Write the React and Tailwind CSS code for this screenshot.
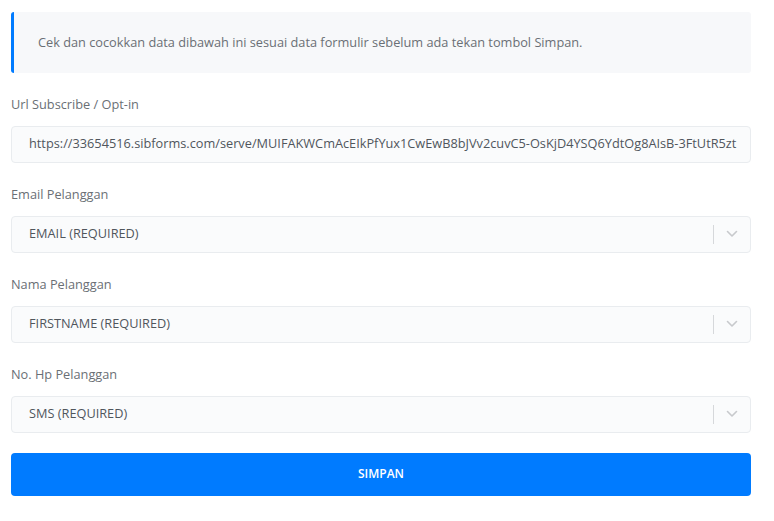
import React from 'react';

function Chevron() {
    return (
        <svg width="12" height="8" viewBox="0 0 12 8" fill="none">
            <path d="M1.5 1.5 L6 6 L10.5 1.5" stroke="#c7c9cc" strokeWidth="1.6" strokeLinecap="round" strokeLinejoin="round" />
        </svg>
    );
}

function SelectBox({ value }) {
    return (
        <div className="h-[37px] flex items-center bg-[#fafbfc] border border-[#e9ecef] rounded-[4px] text-[#50565c]">
            <div className="flex-1 pl-[17px] text-[12.75px]">{value}</div>
            <div className="w-px h-[19px] bg-[#d6d8db]"></div>
            <div className="w-[36px] flex items-center justify-center">
                <Chevron />
            </div>
        </div>
    );
}

export default function App() {
    const fields = [
        { label: 'Email Pelanggan', value: 'EMAIL (REQUIRED)' },
        { label: 'Nama Pelanggan', value: 'FIRSTNAME (REQUIRED)' },
        { label: 'No. Hp Pelanggan', value: 'SMS (REQUIRED)' },
    ];

    return (
        <div className="min-h-screen bg-white" style={{ fontFamily: '"Open Sans", "Liberation Sans", sans-serif' }}>
            <div className="w-[740px] ml-[11px] pt-[12px]">

                {/* info box */}
                <div className="h-[61px] flex items-center bg-[#f7f8fa] border-l-[3px] border-[#007bff] rounded-[3px] pl-[24px] text-[12.75px] text-[#6a6f75]">
                    Cek dan cocokkan data dibawah ini sesuai data formulir sebelum ada tekan tombol Simpan.
                </div>

                <div className="mt-[22px] h-[19.5px] text-[12.75px] text-[#6a6f75]">Url Subscribe / Opt-in</div>
                <div className="mt-[11px] h-[37px] flex items-center bg-[#fafbfc] border border-[#e9ecef] rounded-[4px] px-[17px] text-[12.75px] text-[#50565c] overflow-hidden whitespace-nowrap">
                    https://33654516.sibforms.com/serve/MUIFAKWCmAcEIkPfYux1CwEwB8bJVv2cuvC5-OsKjD4YSQ6YdtOg8AIsB-3FtUtR5zt
                </div>

                {fields.map(f => (
                    <div key={f.label}>
                        <div className="mt-[22.5px] h-[19.5px] text-[12.75px] text-[#6a6f75]">{f.label}</div>
                        <div className="mt-[11px]">
                            <SelectBox value={f.value} />
                        </div>
                    </div>
                ))}

                <button className="mt-[20px] w-full h-[43px] bg-[#007bff] rounded-[4px] text-white text-[12px] font-semibold">
                    SIMPAN
                </button>
            </div>
        </div>
    );
}
